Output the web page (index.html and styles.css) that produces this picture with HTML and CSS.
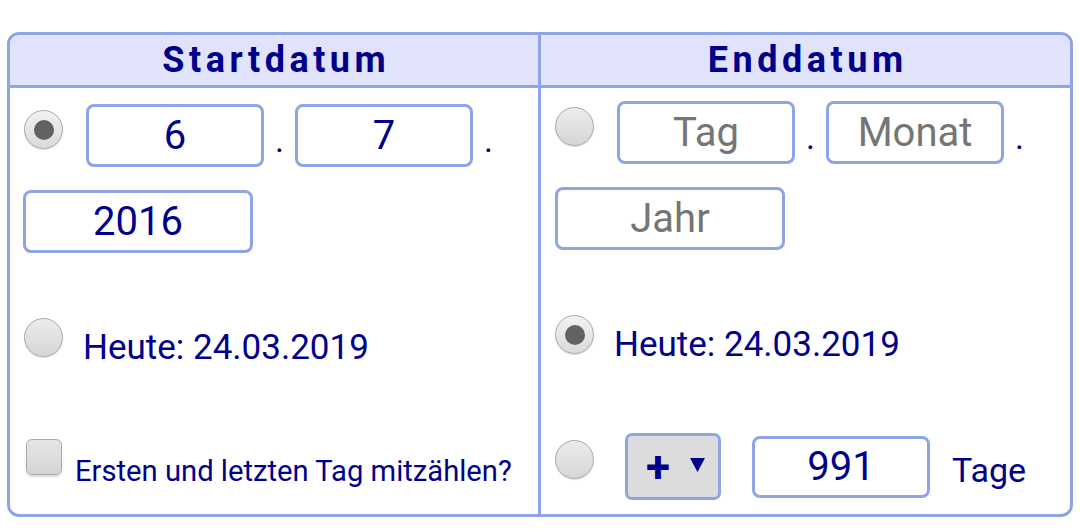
FILE: index.html
```html
<!DOCTYPE html>
<html lang="de">
<head>
<meta charset="utf-8">
<title>Datumsrechner</title>
<link rel="stylesheet" href="styles.css">
</head>
<body>
<div class="calc">
  <div class="head head-left">Startdatum</div>
  <div class="head">Enddatum</div>

  <div class="cell cell-left">
    <div class="date">
      <span class="radio checked"></span>
      <span class="box">6</span><span class="dot">.</span>
      <span class="box">7</span><span class="dot">.</span>
      <span class="box wide">2016</span>
    </div>
    <div class="line today">
      <span class="radio"></span>
      <span class="label">Heute: 24.03.2019</span>
    </div>
    <div class="line count">
      <span class="checkbox"></span>
      <span class="small">Ersten und letzten Tag mitzählen?</span>
    </div>
  </div>

  <div class="cell cell-right">
    <div class="date">
      <span class="radio"></span>
      <span class="box ph">Tag</span><span class="dot">.</span>
      <span class="box ph">Monat</span><span class="dot">.</span>
      <span class="box wide ph">Jahr</span>
    </div>
    <div class="line today">
      <span class="radio checked"></span>
      <span class="label">Heute: 24.03.2019</span>
    </div>
    <div class="line offset">
      <span class="radio"></span>
      <span class="select"><span class="plus">+</span><svg class="arrow" width="15" height="14" viewBox="0 0 15 14"><polygon points="0,0 15,0 7.5,14" fill="#00008b"/></svg></span>
      <span class="box days">991</span>
      <span class="label unit">Tage</span>
    </div>
  </div>
</div>
</body>
</html>
```

FILE: styles.css
```css
html, body {
  margin: 0;
  padding: 0;
  background: #ffffff;
}

body {
  font-family: Roboto, "Liberation Sans", sans-serif;
  color: #00008b;
  padding: 32px 7px 0 7px;
}

.calc {
  width: 1066px;
  height: 485px;
  box-sizing: border-box;
  border: 3px solid #8ea5e5;
  border-radius: 12px;
  overflow: hidden;
  display: grid;
  grid-template-columns: 531px 1fr;
  grid-template-rows: 53px 1fr;
}

.head {
  background: #e0e3fb;
  border-bottom: 3px solid #8ea5e5;
  font-weight: 700;
  font-size: 36px;
  letter-spacing: 4.5px;
  padding-left: 4.5px;
  line-height: 50px;
  text-align: center;
}

.head-left,
.cell-left {
  border-right: 3px solid #8ea5e5;
}

.cell {
  display: flex;
  flex-direction: column;
}

.cell-left {
  padding: 16px 0 0 13px;
}

.cell-right {
  padding: 13px 0 0 14px;
}

.date {
  display: flex;
  flex-wrap: wrap;
  align-items: flex-start;
  row-gap: 23px;
}

.radio {
  flex: none;
  width: 39px;
  height: 39px;
  box-sizing: border-box;
  border-radius: 50%;
  border: 1px solid #a9a9a9;
  background: linear-gradient(#ececec, #d6d6d6);
  box-shadow: 0 1px 1px rgba(0, 0, 0, 0.15);
  position: relative;
}

.radio.checked {
  background: linear-gradient(#f2f2f2, #dadada);
}

.radio.checked::after {
  content: "";
  position: absolute;
  left: 50%;
  top: 50%;
  width: 20px;
  height: 20px;
  margin: -10px 0 0 -10px;
  border-radius: 50%;
  background: #626262;
}

.date .radio {
  margin: 6px 23px 0 1px;
}

.cell-right .date .radio {
  margin-left: 0;
}

.box {
  flex: none;
  width: 178px;
  height: 63px;
  box-sizing: border-box;
  border: 3px solid #8ea5e5;
  border-radius: 8px;
  background: #ffffff;
  font-size: 40px;
  line-height: 57px;
  text-align: center;
  color: #00008b;
}

.box.wide {
  width: 230px;
}

.box.ph {
  color: #757575;
}

.dot {
  flex: none;
  width: 31px;
  align-self: flex-end;
  font-size: 34px;
  line-height: 40px;
  padding-bottom: 7px;
  text-align: center;
}

.line {
  display: flex;
  align-items: flex-start;
}

.today {
  margin-top: 65px;
}

.today .radio {
  margin-left: 1px;
}

.cell-right .today .radio {
  margin-left: 0;
}

.label {
  font-size: 35px;
  line-height: 40px;
  margin-top: 10px;
  margin-left: 20px;
  white-space: nowrap;
}

.count {
  margin-top: 71px;
}

.checkbox {
  flex: none;
  width: 36px;
  height: 36px;
  box-sizing: border-box;
  margin-left: 3px;
  border-radius: 6px;
  border: 1px solid #ababab;
  background: linear-gradient(#e6e6e6, #d4d4d4);
  box-shadow: 0 2px 2px rgba(0, 0, 0, 0.15);
}

.small {
  font-size: 29.2px;
  line-height: 34px;
  margin-top: 15px;
  margin-left: 13px;
  white-space: nowrap;
}

.offset {
  margin-top: 68px;
}

.offset .radio {
  margin-top: 7px;
}

.select {
  flex: none;
  width: 96px;
  height: 67px;
  box-sizing: border-box;
  margin-left: 31px;
  border: 3px solid #8ea5e5;
  border-radius: 7px;
  background: #dcdcdc;
  display: flex;
  align-items: center;
  padding-left: 18px;
  gap: 20px;
}

.plus {
  font-size: 44px;
  font-weight: 700;
  line-height: 44px;
}

.arrow {
  display: block;
  margin-top: -4px;
}

.box.days {
  margin-left: 31px;
  margin-top: 3px;
  height: 62px;
  line-height: 56px;
}

.unit {
  font-size: 34px;
  margin-left: 22px;
  margin-top: 17px;
}
```
